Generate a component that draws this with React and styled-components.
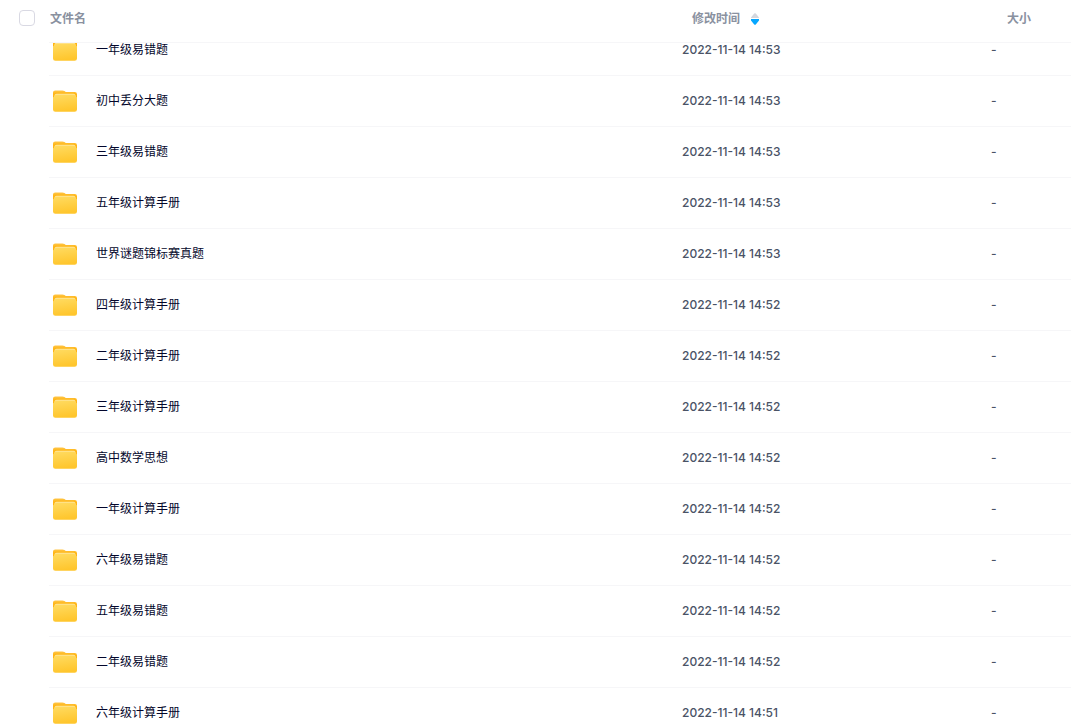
import React, { useLayoutEffect, useRef } from "react";
import styled, { createGlobalStyle } from "styled-components";

const GlobalStyle = createGlobalStyle`
  * { box-sizing: border-box; }
  body {
    margin: 0;
    background: #fff;
    font-family: Inter, "Noto Sans CJK SC", sans-serif;
    font-size: 12px;
    line-height: 18px;
  }
`;

const Scroller = styled.main`
  height: 100vh;
  padding-right: 2px;
  overflow-y: auto;
  scrollbar-width: none;
`;

const Table = styled.table`
  width: 100%;
  table-layout: fixed;
  border-collapse: separate;
  border-spacing: 0;
`;

const Col = styled.col`
  width: ${(p) => p.$width};
`;

const HeadCell = styled.th`
  position: sticky;
  top: 0;
  z-index: 1;
  height: 43px;
  padding: 0 0 ${(p) => (p.$plain ? 6 : 4)}px ${(p) => p.$indent || 0}px;
  background: #fff;
  border-bottom: 1px solid ${(p) => (p.$plain ? "#fff" : "#f6f6f8")};
  color: #8a91a0;
  font-weight: 700;
  text-align: left;
  vertical-align: middle;
`;

const Checkbox = styled.input`
  appearance: none;
  display: block;
  width: 16px;
  height: 16px;
  margin: 0;
  border: 1px solid #d9d9e3;
  border-radius: 4px;
  background: #fff;

  &:checked {
    background: #06a7ff;
    border-color: #06a7ff;
  }
`;

const SortButton = styled.button`
  display: flex;
  align-items: center;
  gap: 11px;
  padding: 0;
  border: 0;
  background: none;
  color: inherit;
  font: inherit;
  cursor: pointer;
`;

const Cell = styled.td`
  height: 51px;
  padding: 0;
  border-bottom: 1px solid ${(p) => (p.$plain ? "transparent" : "#f6f6f8")};
  color: #4a5366;
  font-weight: 500;
  vertical-align: middle;
`;

const FileName = styled.div`
  display: flex;
  align-items: center;
  gap: 19px;
  padding-left: 4px;
`;

const FileLink = styled.a`
  color: #03062b;
  font-weight: 400;
  text-decoration: none;
`;

const Folder = styled.svg`
  display: block;
  flex: none;
  width: 24px;
  height: 22px;
`;

function FolderIcon() {
  return (
    <Folder viewBox="0 0 24 22" aria-hidden="true">
      <path
        d="M0 2.600A2.200 2.200 0 0 1 2.200.4h7.200c.8 0 1.500.2 2.100.7l1.300 1h9a2.200 2.200 0 0 1 2.200 2.200V12H0z"
        fill="url(#folder-back)"
      />
      <path d="M1.400 6.500Q1.400 3.800 3.600 3.800h16.800q2.200 0 2.200 2.700V9H1.400z" fill="#ffe596" />
      <path
        d="M0 7.200q1.300 0 1.700-1 .5-1.400 1.900-1.400h16.800q1.400 0 1.900 1.400.4 1 1.700 1v12.200a2.400 2.400 0 0 1-2.400 2.400H2.400A2.400 2.400 0 0 1 0 19.400z"
        fill="url(#folder-front)"
      />
    </Folder>
  );
}

function SortIcon() {
  return (
    <svg width="8" height="12" viewBox="0 0 8 12" aria-hidden="true">
      <path d="M0 5q0-.6.4-1.100L3.200.6q.8-.8 1.600 0l2.800 3.300q.4.500.4 1.100z" fill="#d4d7de" />
      <path d="M0 6h8v1.200q0 .5-.4.900L4.800 11.400q-.8.800-1.600 0L.4 8.100Q0 7.700 0 7.200z" fill="#06a7ff" />
    </svg>
  );
}

const files = [
  ["一年级易错题", "2022-11-14 14:53"],
  ["初中丢分大题", "2022-11-14 14:53"],
  ["三年级易错题", "2022-11-14 14:53"],
  ["五年级计算手册", "2022-11-14 14:53"],
  ["世界谜题锦标赛真题", "2022-11-14 14:53"],
  ["四年级计算手册", "2022-11-14 14:52"],
  ["二年级计算手册", "2022-11-14 14:52"],
  ["三年级计算手册", "2022-11-14 14:52"],
  ["高中数学思想", "2022-11-14 14:52"],
  ["一年级计算手册", "2022-11-14 14:52"],
  ["六年级易错题", "2022-11-14 14:52"],
  ["五年级易错题", "2022-11-14 14:52"],
  ["二年级易错题", "2022-11-14 14:52"],
  ["六年级计算手册", "2022-11-14 14:51"],
];

export default function App() {
  const scroller = useRef(null);

  useLayoutEffect(() => {
    scroller.current.scrollTop = 18;
  }, []);

  return (
    <>
      <GlobalStyle />
      <svg width="0" height="0" style={{ display: "block" }} aria-hidden="true">
        <linearGradient id="folder-back" x1="0" y1="0" x2="0" y2="1">
          <stop offset="0" stopColor="#ffc64a" />
          <stop offset="0.3" stopColor="#ffb514" />
        </linearGradient>
        <linearGradient id="folder-front" x1="0" y1="0" x2="0.2" y2="1">
          <stop offset="0" stopColor="#ffdb61" />
          <stop offset="1" stopColor="#ffc62d" />
        </linearGradient>
      </svg>
      <Scroller ref={scroller}>
        <Table>
          <colgroup>
            <Col $width="49px" />
            <Col />
            <Col $width="309px" />
            <Col $width="80px" />
          </colgroup>
          <thead>
            <tr>
              <HeadCell $plain $indent={19}>
                <Checkbox type="checkbox" aria-label="全选" />
              </HeadCell>
              <HeadCell $indent={1}>文件名</HeadCell>
              <HeadCell $indent={10} aria-sort="descending">
                <SortButton type="button">
                  修改时间
                  <SortIcon />
                </SortButton>
              </HeadCell>
              <HeadCell $indent={16}>大小</HeadCell>
            </tr>
          </thead>
          <tbody>
            {files.map(([name, modified]) => (
              <tr key={name}>
                <Cell $plain />
                <Cell>
                  <FileName>
                    <FolderIcon />
                    <FileLink href="#">{name}</FileLink>
                  </FileName>
                </Cell>
                <Cell>{modified}</Cell>
                <Cell>-</Cell>
              </tr>
            ))}
          </tbody>
        </Table>
      </Scroller>
    </>
  );
}
